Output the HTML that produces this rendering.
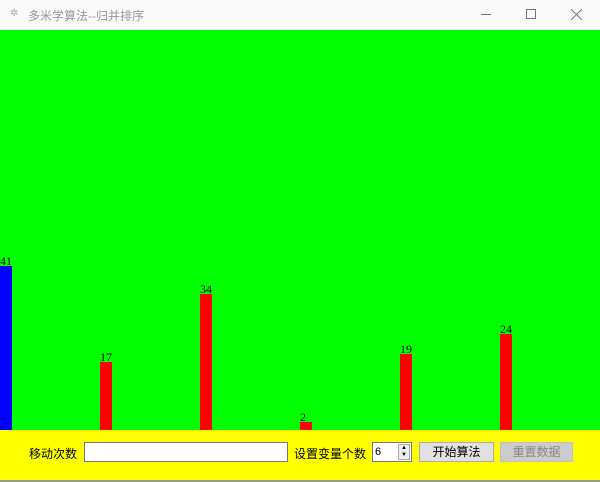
<!DOCTYPE html>
<html><head><meta charset="utf-8"><style>
*{margin:0;padding:0;box-sizing:border-box}
body{width:600px;height:482px;overflow:hidden;background:#fff;position:relative;font-family:"Liberation Sans","Noto Sans CJK SC",sans-serif}
.t{position:absolute;left:0;top:0;width:600px;height:30px;background:#fafafa}
.tt{position:absolute;left:28px;top:7px;font-size:12px;color:#999}
.g{position:absolute;left:0;top:30px;width:600px;height:400px;background:#00ff00}
.b{position:absolute;width:12px;background:#f00}
.l{position:absolute;font-family:"Liberation Serif",serif;font-size:12px;color:#000;line-height:11px}
.y{position:absolute;left:0;top:430px;width:600px;height:50px;background:#ffff00}
.s{position:absolute;font-size:12px;color:#000}
.btn{position:absolute;top:442px;height:20px;background:#e1e1e1;border:1px solid #adadad;font-size:12px;text-align:center;line-height:18px}
</style></head><body>
<div class="t"><span style="position:absolute;left:10px;top:8px;font-size:10px;color:#aaa">✲</span><span class="tt">多米学算法--归并排序</span>
<div style="position:absolute;left:481px;top:14px;width:10px;height:1px;background:#777"></div>
<div style="position:absolute;left:526px;top:9px;width:10px;height:10px;border:1px solid #777"></div>
<svg style="position:absolute;left:571px;top:9px" width="11" height="11"><path d="M0 0L11 11M11 0L0 11" stroke="#777" stroke-width="1"/></svg></div>
<div class="g"></div>
<div class="b" style="left:0;top:266px;height:164px;background:#00f"></div><div class="l" style="left:0;top:256px">41</div>
<div class="b" style="left:100px;top:362px;height:68px"></div><div class="l" style="left:100px;top:352px">17</div>
<div class="b" style="left:200px;top:294px;height:136px"></div><div class="l" style="left:200px;top:284px">34</div>
<div class="b" style="left:300px;top:422px;height:8px"></div><div class="l" style="left:300px;top:412px">2</div>
<div class="b" style="left:400px;top:354px;height:76px"></div><div class="l" style="left:400px;top:344px">19</div>
<div class="b" style="left:500px;top:334px;height:96px"></div><div class="l" style="left:500px;top:324px">24</div>
<div class="y"></div>
<div class="s" style="left:29px;top:445px">移动次数</div>
<div style="position:absolute;left:84px;top:442px;width:204px;height:20px;background:#fff;border:1px solid #7a7a7a"></div>
<div class="s" style="left:294px;top:445px">设置变量个数</div>
<div style="position:absolute;left:372px;top:442px;width:40px;height:20px;background:#fff;border:1px solid #7a7a7a;font-size:11px;padding-left:2px;line-height:18px">6
<div style="position:absolute;right:1px;top:1px;width:12px;height:16px;background:#eee;border:1px solid #aaa;font-size:6px;line-height:7px;text-align:center">▲<br>▼</div></div>
<div class="btn" style="left:419px;width:75px">开始算法</div>
<div class="btn" style="left:500px;width:73px;background:#ccc;border-color:#bfbfbf;color:#888">重置数据</div>
<div style="position:absolute;left:0;top:480px;width:600px;height:2px;background:#999"></div>
</body></html>
